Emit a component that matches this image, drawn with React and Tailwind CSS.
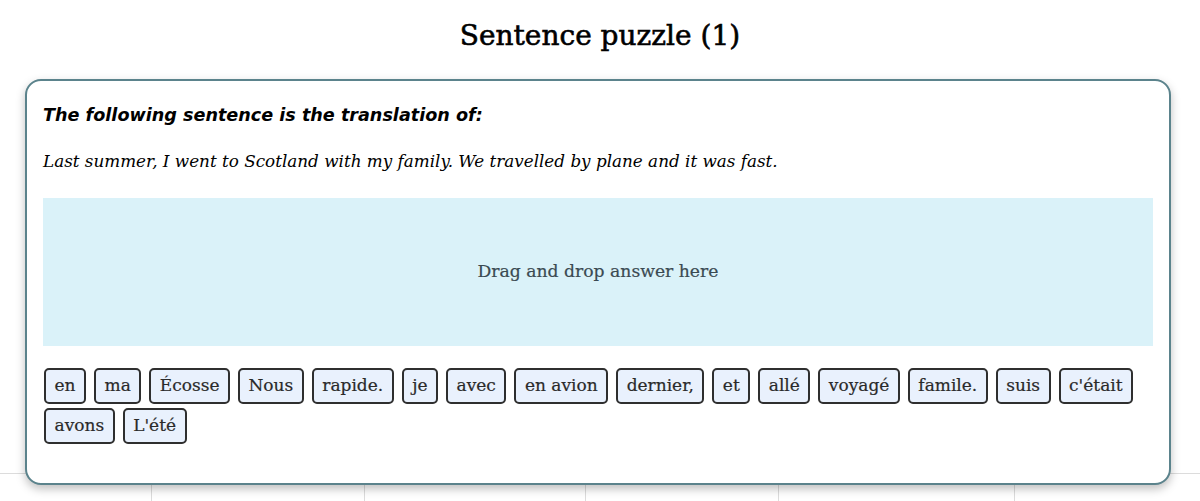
const words = [
  'en', 'ma', 'Écosse', 'Nous', 'rapide.', 'je', 'avec', 'en avion', 'dernier,', 'et',
  'allé', 'voyagé', 'famile.', 'suis', "c'était", 'avons', "L'été",
];

export default function App() {
  return (
    <div className="min-h-[501px] bg-white overflow-hidden">
      <h1 className="pt-[16px] h-[79px] text-center text-[28px] text-black leading-[40px] font-[DejaVu_Serif,serif] [-webkit-text-stroke:0.6px_black]">
        Sentence puzzle (1)
      </h1>

      <div className="relative z-10 ml-[25px] mr-[29px] rounded-[16px] border-2 border-[#5b838c] bg-white px-[16px] pt-[20px] pb-[39px] shadow-[0_4px_10px_rgba(0,0,0,0.25)]">
        <p className="text-[17.6px] font-bold italic text-black leading-[28px] font-['DejaVu_Sans',sans-serif]">
          The following sentence is the translation of:
        </p>
        <p className="mt-[22px] text-[16.8px] italic text-black leading-[20px] font-[DejaVu_Serif,serif]">
          Last summer, I went to Scotland with my family. We travelled by plane and it was fast.
        </p>

        <div className="mt-[27px] flex h-[148px] items-center justify-center bg-[#daf2f9]">
          <span className="text-[17.2px] text-[#3a4a52] font-[DejaVu_Serif,serif] [-webkit-text-stroke:0.2px_#3a4a52]">
            Drag and drop answer here
          </span>
        </div>

        <div className="mt-[22px] flex flex-wrap gap-x-[8px] gap-y-[4px] pl-[1px]">
          {words.map((w) => (
            <span
              key={w}
              className="flex h-[36px] items-center rounded-[5px] border-2 border-[#2f2f2f] bg-[#e9f1fd] px-[8.5px] text-[17px] text-[#2a2a2a] font-[DejaVu_Serif,serif] [-webkit-text-stroke:0.2px_#2a2a2a]"
            >
              {w}
            </span>
          ))}
        </div>
      </div>

      <div className="-mt-[12px] grid h-[40px] grid-cols-[152px_213px_221px_193px_236px_1fr] border-t border-[#dcdcdc]">
        <div className="border-r border-[#dcdcdc]" />
        <div className="border-r border-[#dcdcdc]" />
        <div className="border-r border-[#dcdcdc]" />
        <div className="border-r border-[#dcdcdc]" />
        <div className="border-r border-[#dcdcdc]" />
        <div />
      </div>
    </div>
  );
}
